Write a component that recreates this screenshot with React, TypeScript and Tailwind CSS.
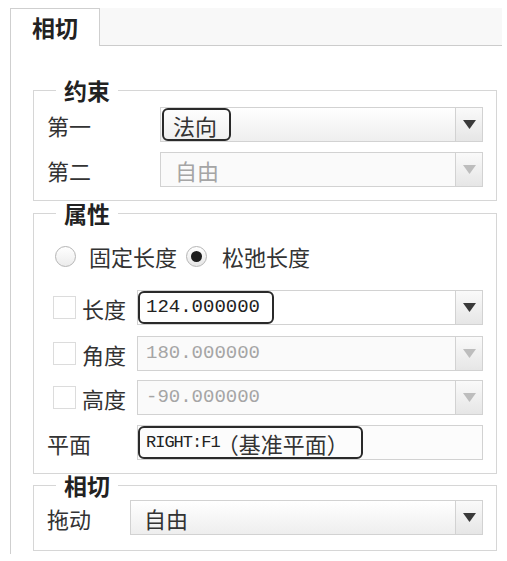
import React from 'react'

const cjk = "font-['Noto_Sans_CJK_SC','Liberation_Sans',sans-serif]"

function Arrow({ disabled }: { disabled?: boolean }) {
  return (
    <div className="w-[27px] h-full border-l border-[#d2d2d2] flex items-center justify-center bg-linear-to-b from-[#fafafa] to-[#e6e6e6]">
      <svg width="13" height="9" viewBox="0 0 13 9">
        <path d="M0 0h13L6.5 9z" fill={disabled ? '#bdbdbd' : '#3a3a3a'} />
      </svg>
    </div>
  )
}

function Highlight({ children, mono }: { children: React.ReactNode; mono?: boolean }) {
  return (
    <span className={`h-full flex items-center border-2 border-[#2a2a2a] rounded-[6px] ${mono ? 'pl-[6px] pr-[12px]' : 'pl-[9px] pr-[12px]'}`}>
      {children}
    </span>
  )
}

function Combo({ children, disabled, padded = true, noButton, className = '' }: {
  children: React.ReactNode
  disabled?: boolean
  padded?: boolean
  noButton?: boolean
  className?: string
}) {
  return (
    <div className={`flex-1 h-[35px] flex items-stretch border border-[#d2d2d2] ${disabled ? 'bg-[#fafafa] text-[#a5a5a5]' : noButton ? 'bg-[#fcfcfc] text-[#333]' : 'bg-linear-to-b from-[#ffffff] to-[#eeeeee] text-[#333]'} ${className}`}>
      <div className={`flex-1 flex items-center ${padded ? 'pl-[14px]' : ''}`}>{children}</div>
      {!noButton && <Arrow disabled={disabled} />}
    </div>
  )
}

function Group({ title, children, className = '' }: { title: string; children: React.ReactNode; className?: string }) {
  return (
    <fieldset className={`border border-[#d6d6d6] px-[13px] ${className}`}>
      <legend className="ml-[9px] px-[8px] text-[23px] leading-[22px] font-bold text-[#222]">{title}</legend>
      {children}
    </fieldset>
  )
}

function Check() {
  return <span className="shrink-0 w-[23px] h-[23px] border border-[#dcdcdc] bg-white ml-[6px] mr-[6px]" />
}

export default function App() {
  return (
    <div className={`w-[507px] h-[561px] bg-white text-[22px] leading-none text-[#333] ${cjk}`}>
      <div className="pt-2 pl-[10px] pr-[5px]">
        <div className="flex h-[38px]">
          <div className="w-[90px] border border-b-0 border-[#cfcfcf] bg-white flex items-center justify-center text-[23px] font-bold text-[#222]">
            相切
          </div>
          <div className="flex-1 bg-[#f8f8f8] border-b border-[#cccccc]" />
        </div>

        <div className="border-l border-[#cfcfcf] pt-[33px] pb-[3px] pl-[22px] pr-[5px]">
          <Group title="约束" className="pb-[13px]">
            <div className="mt-[6px] flex items-center">
              <span className="w-[113px]">第一</span>
              <Combo padded={false} className="pl-[1px]">
                <Highlight>法向</Highlight>
              </Combo>
            </div>
            <div className="mt-[10px] flex items-center">
              <span className="w-[113px]">第二</span>
              <Combo disabled>自由</Combo>
            </div>
          </Group>

          <Group title="属性" className="mt-[1px] pb-[13px]">
            <div className="mt-[15px] h-[34px] flex items-center">
              <span className="ml-[8px] w-[21px] h-[21px] rounded-full border border-[#b5b5b5] bg-linear-to-b from-[#ffffff] to-[#ececec]" />
              <span className="ml-[13px]">固定长度</span>
              <span className="ml-[9px] w-[21px] h-[21px] rounded-full border border-[#b5b5b5] bg-linear-to-b from-[#ffffff] to-[#e6e6e6] flex items-center justify-center">
                <span className="w-[11px] h-[11px] rounded-full bg-[#1e1e1e]" />
              </span>
              <span className="ml-[15px]">松弛长度</span>
            </div>

            <div className="mt-[17px] flex items-center">
              <Check />
              <span className="w-[55px]">长度</span>
              <Combo padded={false} className="bg-none bg-white">
                <span className="font-['Liberation_Mono',monospace] text-[19px] text-[#222] h-full flex">
                  <Highlight mono>124.000000</Highlight>
                </span>
              </Combo>
            </div>
            <div className="mt-[11px] flex items-center">
              <Check />
              <span className="w-[55px]">角度</span>
              <Combo disabled padded={false}>
                <span className="pl-[8px] font-['Liberation_Mono',monospace] text-[19px]">180.000000</span>
              </Combo>
            </div>
            <div className="mt-[9px] flex items-center">
              <Check />
              <span className="w-[55px]">高度</span>
              <Combo disabled padded={false}>
                <span className="pl-[8px] font-['Liberation_Mono',monospace] text-[19px]">-90.000000</span>
              </Combo>
            </div>
            <div className="mt-[10px] flex items-center">
              <span className="w-[90px]">平面</span>
              <Combo noButton padded={false}>
                <Highlight mono>
                  <span className="font-['Liberation_Mono',monospace] text-[17px] tracking-[-1px] text-[#222]">RIGHT:F1</span>
                  <span className="-ml-[3px]">（基准平面）</span>
                </Highlight>
              </Combo>
            </div>
          </Group>

          <Group title="相切" className="pb-[15px]">
            <div className="mt-[4px] flex items-center">
              <span className="w-[83px]">拖动</span>
              <Combo>
                <span className="-ml-[1px]">自由</span>
              </Combo>
            </div>
          </Group>
        </div>
      </div>
    </div>
  )
}
